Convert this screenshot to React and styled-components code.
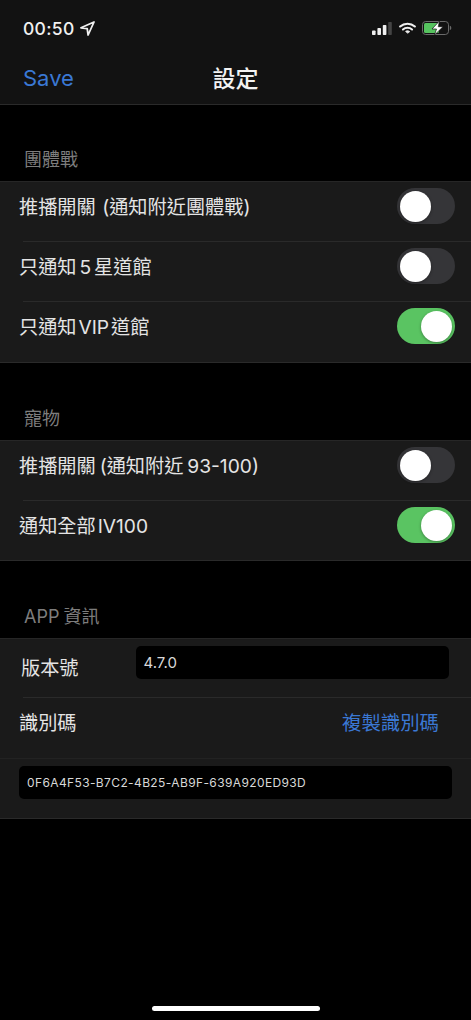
import React from "react";
import styled, { createGlobalStyle } from "styled-components";

const Global = createGlobalStyle`
  html, body { margin: 0; padding: 0; background: #000; }
  body { font-family: "Inter", "Liberation Sans", "Noto Sans CJK TC", sans-serif; }
`;
const CJK = `"Inter", "Noto Sans CJK TC", sans-serif`;

const Screen = styled.div`
  width: 471px; height: 1020px; background: #000; position: relative; overflow: hidden;
  display: flex; flex-direction: column; color: #e6e6e6; font-family: ${CJK};
`;
const Header = styled.header`
  height: 104px; background: #121212; border-bottom: 1px solid #2a2a2a;
  display: flex; flex-direction: column; flex: none;
`;
const StatusBar = styled.div`
  height: 56px; padding: 0 19px 0 23px; display: flex; align-items: center; justify-content: space-between;
`;
const Clock = styled.div`
  display: flex; align-items: center; gap: 5px; font-size: 17.5px; font-weight: 500; color: #f0f0f0; letter-spacing: 0.3px;
`;
const StatusIcons = styled.div`display: flex; align-items: center; gap: 6px;`;
const NavBar = styled.div`
  height: 48px; padding: 0 23px 4px; box-sizing: border-box; display: grid; grid-template-columns: 1fr auto 1fr; align-items: center;
`;
const Save = styled.div`font-size: 22px; color: #3a78d4;`;
const Title = styled.div`font-size: 23px; font-weight: 500; color: #f2f2f2; margin-bottom: 3px;`;

const SectionTitle = styled.div`
  height: ${p => p.$h}px; flex: none; padding: 0 0 10px 24px; box-sizing: border-box;
  display: flex; align-items: flex-end; font-size: 18px; color: #7d7d7d; word-spacing: -1px;
`;
const Group = styled.section`
  background: #1a1a1a; border-top: 1px solid #262626; border-bottom: 1px solid #2a2a2a; flex: none;
`;
const Row = styled.div`
  height: ${p => p.$h || 60}px; box-sizing: border-box; padding: 0 16px 12px 19px;
  display: flex; align-items: center; justify-content: space-between; position: relative;
  &::before {
    content: ""; display: ${p => (p.$divider ? "block" : "none")};
    position: absolute; top: -1px; left: 23px; right: 0; height: 1px; background: #2a2a2a;
  }
`;
const Label = styled.div`
  font-size: 19.2px; color: #e4e4e4; white-space: pre; word-spacing: ${p => p.$ws ?? -1.5}px;
`;
const Track = styled.div`
  width: 58px; height: 36px; border-radius: 18px; flex: none; box-sizing: border-box; padding: 3px;
  display: flex; justify-content: ${p => (p.$on ? "flex-end" : "flex-start")};
  background: ${p => (p.$on ? "#5ac462" : "#353538")};
`;
const Knob = styled.div`width: 31px; height: 31px; border-radius: 50%; background: #fff; box-shadow: 0 1px 3px rgba(0,0,0,.35);`;
const VersionRow = styled(Row)`padding: 0 22px 0 21px; gap: 57px;`;
const VersionLabel = styled(Label)`margin-top: -4px;`;
const Field = styled.div`
  background: #000; border-radius: 5px; flex: 1; box-sizing: border-box; display: flex; align-items: center;
  height: 33px; padding: 0 8px; font-size: ${p => p.$size}px; color: #d8d8d8; letter-spacing: ${p => p.$ls || 0}px;
`;
const VersionField = styled(Field)`margin-top: -12px;`;
const IdBlock = styled.div`
  height: 60px; box-sizing: border-box; padding: 7px 19px 0; border-top: 1px solid #222; display: flex; align-items: flex-start;
`;
const IdRow = styled(Row)`padding: 0 32px 13px 19px;`;
const Copy = styled.div`font-size: 19.4px; color: #3a78d4;`;
const HomeBar = styled.div`
  position: absolute; left: 152px; bottom: 9px; width: 168px; height: 5px; border-radius: 3px; background: #fff;
`;

const Toggle = ({ on }) => <Track $on={on}><Knob /></Track>;

export default function App() {
  return (
    <Screen>
      <Global />
      <Header>
        <StatusBar>
          <Clock>
            00:50
            <svg width="15" height="15" viewBox="0 0 15 15"><path d="M14 1 1 6.8l6.2.9.9 6.3z" fill="none" stroke="#f0f0f0" strokeWidth="1.8" strokeLinejoin="round" /></svg>
          </Clock>
          <StatusIcons>
            <svg width="21" height="13" viewBox="0 0 21 13">
              <rect x="0" y="8.500" width="3.600" height="4.500" rx=".8" fill="#f0f0f0" />
              <rect x="5.400" y="6" width="3.600" height="7" rx=".8" fill="#f0f0f0" />
              <rect x="10.800" y="3" width="3.600" height="10" rx=".8" fill="#f0f0f0" />
              <rect x="16.200" y="0" width="3.600" height="13" rx=".8" fill="#444" />
            </svg>
            <svg width="17" height="13" viewBox="0 0 18 13" fill="none" stroke="#f0f0f0" strokeWidth="2.200" strokeLinecap="round">
              <path d="M1.200 4.400c4.400-4 11.200-4 15.600 0" />
              <path d="M4.200 7.500c2.700-2.400 6.900-2.400 9.600 0" />
              <path d="M9 11.200 7 9.600c1.200-.9 2.800-.9 4 0z" fill="#f0f0f0" strokeWidth="1" />
            </svg>
            <svg width="30" height="14" viewBox="0 0 30 14">
              <rect x=".5" y=".5" width="26" height="13" rx="3.200" fill="none" stroke="#6a6a6a" />
              <rect x="2" y="2" width="15" height="10" rx="1.500" fill="#56c35f" />
              <path d="M27.800 4.800c1 .3 1.500 1.200 1.500 2.200s-.5 1.900-1.500 2.200z" fill="#6a6a6a" />
              <path d="M17.500 0 10 8h4.500l-2 6 8.500-8.300h-4.800z" fill="#fff" stroke="#121212" strokeWidth=".7" />
            </svg>
          </StatusIcons>
        </StatusBar>
        <NavBar>
          <Save>Save</Save>
          <Title>設定</Title>
          <span />
        </NavBar>
      </Header>

      <SectionTitle $h={76}>團體戰</SectionTitle>
      <Group>
        <Row><Label $ws={1}>推播開關 (通知附近團體戰)</Label><Toggle /></Row>
        <Row $divider><Label $ws={-2.5}>只通知 5 星道館</Label><Toggle /></Row>
        <Row $divider><Label $ws={-3.5}>只通知 VIP 道館</Label><Toggle on /></Row>
      </Group>

      <SectionTitle $h={77}>寵物</SectionTitle>
      <Group>
        <Row><Label>推播開關 (通知附近 93-100)</Label><Toggle /></Row>
        <Row $h={59} $divider><Label $ws={-3.5}>通知全部 IV100</Label><Toggle on /></Row>
      </Group>

      <SectionTitle $h={77}>APP 資訊</SectionTitle>
      <Group>
        <VersionRow $h={59}>
          <VersionLabel>版本號</VersionLabel>
          <VersionField $size={15}>4.7.0</VersionField>
        </VersionRow>
        <IdRow $h={60} $divider>
          <Label>識別碼</Label>
          <Copy>複製識別碼</Copy>
        </IdRow>
        <IdBlock>
          <Field $size={12} $ls={0.38}>0F6A4F53-B7C2-4B25-AB9F-639A920ED93D</Field>
        </IdBlock>
      </Group>
      <HomeBar />
    </Screen>
  );
}
